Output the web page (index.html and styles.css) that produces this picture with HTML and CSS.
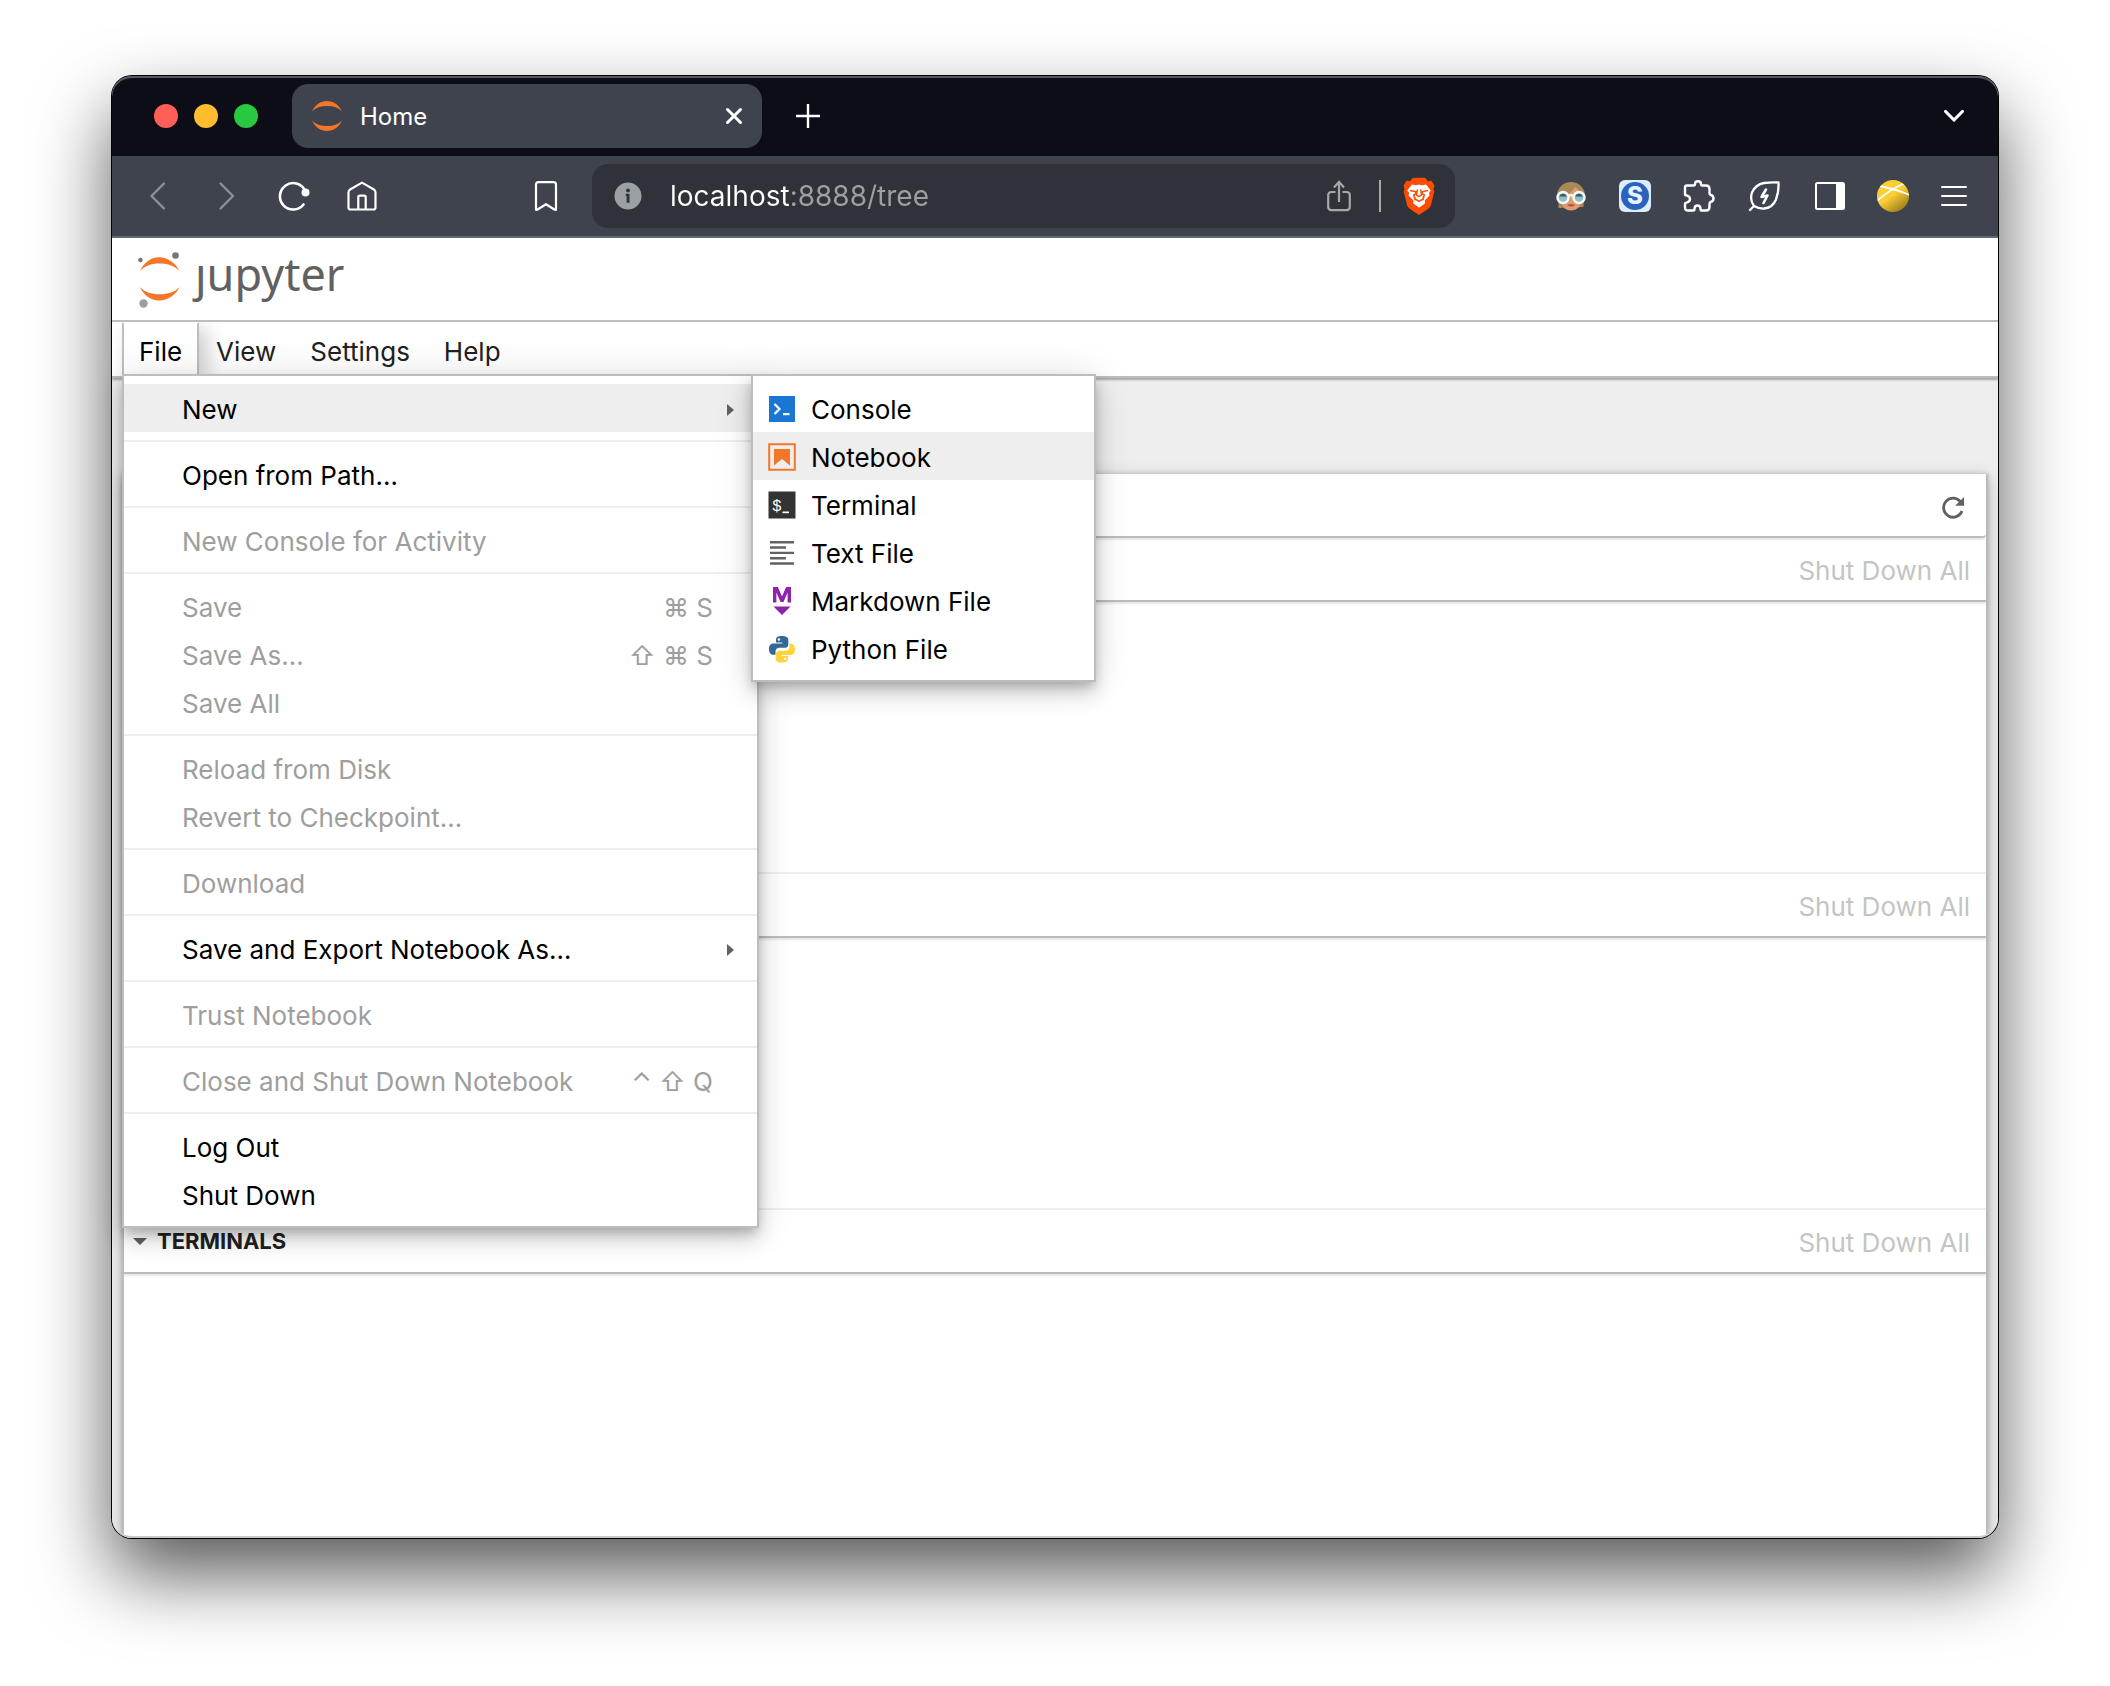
FILE: index.html
```html
<!DOCTYPE html>
<html lang="en">
<head>
<meta charset="utf-8">
<title>Home</title>
<meta name="viewport" content="width=device-width, initial-scale=1">
<link rel="stylesheet" href="styles.css">
</head>
<body>
<div class="window">
  <div class="tabstrip">
    <div class="lights">
      <button class="light light-close" aria-label="Close window"></button>
      <button class="light light-min" aria-label="Minimize window"></button>
      <button class="light light-max" aria-label="Zoom window"></button>
    </div>
    <div class="tab">
      <svg class="tab-icon" viewBox="0 0 30 30" fill="#f37726"><path d="M0 10.500C3 4 8.500 0 15 0s12 4 15 10.500C26.500 6.800 21.500 5 15 5S3.500 6.800 0 10.500zM0 19.500C3 26 8.500 30 15 30s12-4 15-10.500C26.500 23.200 21.500 25 15 25S3.500 23.200 0 19.500z"/></svg>
      <span class="tab-title">Home</span>
      <button class="icon-button" aria-label="Close tab"><svg width="16" height="16" viewBox="0 0 16 16" fill="none" stroke="#fff" stroke-width="3" stroke-linecap="round"><path d="M1.500 1.500l13 13M14.500 1.500l-13 13"/></svg></button>
    </div>
    <button class="icon-button" aria-label="New tab"><svg width="24" height="24" viewBox="0 0 24 24" fill="none" stroke="#fff" stroke-width="2.400"><path d="M12 0v24M0 12h24"/></svg></button>
    <button class="icon-button tab-list" aria-label="Search tabs"><svg width="20" height="14" viewBox="0 0 20 14" fill="none" stroke="#fff" stroke-width="3.200" stroke-linecap="round" stroke-linejoin="round"><path d="M1.600 2.500l8.400 8.500 8.400-8.500"/></svg></button>
  </div>

  <div class="toolbar">
    <div class="nav-buttons">
      <button class="icon-button" aria-label="Back"><svg width="32" height="32" viewBox="0 0 32 32" fill="none" stroke="#8b9096" stroke-width="2.400" stroke-linecap="round" stroke-linejoin="round"><path d="M22 3.500L9.500 16 22 28.500"/></svg></button>
      <button class="icon-button" aria-label="Forward"><svg width="32" height="32" viewBox="0 0 32 32" fill="none" stroke="#8b9096" stroke-width="2.400" stroke-linecap="round" stroke-linejoin="round"><path d="M10.500 3.500L23 16 10.500 28.500"/></svg></button>
      <button class="icon-button" aria-label="Reload"><svg width="32" height="32" viewBox="0 0 32 32" fill="none" stroke="#fff" stroke-width="2.600" stroke-linecap="round"><path d="M27 10.500A13.200 13.200 0 1 0 25.500 24.500"/><circle cx="27.500" cy="12.500" r="4" fill="#fff" stroke="none"/></svg></button>
      <button class="icon-button" aria-label="Home page"><svg width="32" height="32" viewBox="0 0 32 32" fill="none" stroke="#fff" stroke-width="2.200" stroke-linejoin="round"><path d="M2.500 12.500q0-2 1.600-3L16 2.600l11.900 6.900q1.600 1 1.600 3V27.500q0 2-2 2h-23q-2 0-2-2zM12.300 29.500V17q0-1.400 1.400-1.400h4.600q1.400 0 1.400 1.400v12.500"/></svg></button>
    </div>
    <button class="icon-button bookmark" aria-label="Bookmark"><svg width="32" height="32" viewBox="0 0 32 32" fill="none" stroke="#fff" stroke-width="2.200" stroke-linejoin="round"><path d="M8.500 2.200h15q2.500 0 2.500 2.500v24.500q0 1.300-1.200.5L16 24.200l-8.800 5.500q-1.200.8-1.200-.5V4.700q0-2.500 2.500-2.500z"/></svg></button>
    <div class="address">
      <svg width="28" height="28" viewBox="0 0 28 28"><circle cx="14" cy="14" r="13.500" fill="#9ba0a5"/><circle cx="14" cy="8.400" r="1.900" fill="#2f3239"/><path d="M11.800 11.700h3.700v9h-2.900v-7h-.8z" fill="#2f3239"/></svg>
      <input class="address-input" type="text" aria-label="Address" value="localhost:8888/tree">
      <button class="icon-button" aria-label="Share"><svg width="24" height="32" viewBox="0 0 24 32" fill="none" stroke="#a5a8ab" stroke-width="2.200"><path d="M8.500 12H4.500Q1.200 12 1.200 15.300v11.500q0 3.300 3.300 3.300h15q3.300 0 3.300-3.300V15.300q0-3.300-3.300-3.300h-4M12 22V2.200M7 7.400l5-5.600 5 5.600"/></svg></button>
      <span class="address-rule"></span>
      <button class="icon-button" aria-label="Shields"><svg width="32" height="38" viewBox="0 0 32 38"><path d="M10 .8h12l3 3.400 3.500-.4 3 4.800-1 3.400.8 2.600-3.300 13.500q-.7 2.300-2.600 3.700L16 38l-9.400-6.200Q4.700 30.400 4 28.100L.7 14.600l.8-2.600-1-3.400 3-4.800 3.500.4z" fill="#fb4c02"/><path d="M9 7.400l4 .9 3-.8 3 .8 4-.9 4.800 6-1.700 2.300.4 2.700-4.700 5.200.3 2.700-6 4.500-6-4.500.3-2.700-4.800-5.200.5-2.700-1.900-2.300z" fill="#fff"/><path d="M6.800 13.600l5.600 1 .8 2-2.500 1.200 1.500 4.300 3.800 2.300 3.800-2.300 1.500-4.300-2.500-1.200.8-2 5.600-1M14.300 12.500L13.500 18l2.500 1.700 2.500-1.700-.8-5.500" fill="none" stroke="#fb4c02" stroke-width="1.500"/><path d="M9.500 17l2 6.300 2.500.2-2.600-2zM22.500 17l-2 6.300-2.500.2 2.600-2z" fill="#fb4c02"/></svg></button>
    </div>
    <div class="extensions">
      <button class="icon-button" aria-label="Profile extension"><svg width="32" height="32" viewBox="0 0 32 32"><circle cx="16" cy="16" r="14" fill="#a98958"/><path d="M3.500 18h4v10h-4zM24.500 18h4v9h-4z" fill="#a98958"/><path d="M5.500 16Q17 14 20 7q5 3 6.500 9 0 14-10.500 14.500Q6 30 5.500 16z" fill="#e29a70"/><path d="M12 25q4-2 8 0-4 3-8 0z" fill="#b0523e"/><g fill="#8dc1ca" stroke="#f5f8f8" stroke-width="2.500"><circle cx="8" cy="17.500" r="5.500"/><circle cx="24" cy="17.500" r="5.500"/><path d="M13.500 16q2.500-1.500 5 0" fill="none"/></g><path d="M4 16.500a4.300 4.300 0 0 1 8 0zM20 16.500a4.300 4.300 0 0 1 8 0z" fill="#3d5860"/></svg></button>
      <button class="icon-button s-badge" aria-label="S extension"><span class="s-badge-disc">S</span></button>
      <button class="icon-button" aria-label="Extensions"><svg width="32" height="32" viewBox="0 0 32 32" fill="none" stroke="#fff" stroke-width="2.400" stroke-linejoin="round"><path d="M4 5.500h6.500q1.500 0 1.500-1.200 0-3 3-3t3 3q0 1.200 1.500 1.200h3.500q3.500 0 3.500 3.500v4q0 1.800 1.200 2 2.800.6 2.800 3.500t-2.800 3.500q-1.200.3-1.200 2v3q0 3.500-3.500 3.500h-4.500q-1 0-1-2-.3-3-3-3t-3 3q0 2-1 2H5q-3 0-3-3v-3.500q0-1 1.500-1.300 3.500-1 3.500-3.700t-3.500-3.700Q2 15.500 2 14.500v-7q0-2 2-2z"/></svg></button>
      <button class="icon-button" aria-label="Energy saver"><svg width="36" height="32" viewBox="0 0 36 32" fill="none" stroke="#fff" stroke-width="2.300" stroke-linecap="round" stroke-linejoin="round"><path d="M3 30l4-4Q2.500 20 5 12.500 8.500 4.500 17 3q8-1 14.500-.5.500 9-2.500 17-3.500 8.500-12 9-5.500.300-10-2.500"/><path d="M19 9.500L14.500 17l6-1.500L16.500 23" stroke-width="2.600"/></svg></button>
      <button class="icon-button" aria-label="Side panel"><svg width="30" height="28" viewBox="0 0 30 28"><rect x="1" y="1" width="28" height="26" rx="1.500" fill="none" stroke="#fff" stroke-width="2"/><path d="M21 1h8v26h-8z" fill="#fff"/></svg></button>
      <button class="icon-button" aria-label="Profile"><svg width="32" height="32" viewBox="0 0 32 32"><defs><linearGradient id="gold" x1=".2" y1=".1" x2=".8" y2=".95"><stop offset=".45" stop-color="#f9ce37"/><stop offset="1" stop-color="#9b7a16"/></linearGradient><clipPath id="disc"><circle cx="16" cy="16" r="16"/></clipPath></defs><circle cx="16" cy="16" r="16" fill="url(#gold)"/><path d="M0 21Q12 10 28 3M3 6q15 3 30 9" fill="none" stroke="#fff" stroke-width="1.800" clip-path="url(#disc)"/></svg></button>
      <button class="icon-button" aria-label="Browser menu"><svg width="26" height="20" viewBox="0 0 26 20" stroke="#fff" stroke-width="2" stroke-linecap="round"><path d="M1 1h24M1 10h24M1 19h24"/></svg></button>
    </div>
  </div>

  <header class="site-header">
    <a class="logo" href="#">
      <svg width="44" height="58" viewBox="0 0 44 58"><path d="M3 20C6.500 12 13.500 6.200 22 6.200S39 12 42.500 20C38 15 31 12.400 22.500 12.400S7.500 15 3 20zM3 36C6.500 44 13.500 49.500 22 49.500S39 44 42.500 36C38 41 31 43.300 22.500 43.300S7.500 41 3 36z" fill="#f37726"/><circle cx="38.500" cy="4.500" r="3.300" fill="#767677"/><circle cx="3.500" cy="9" r="2.300" fill="#767677"/><circle cx="6.500" cy="52.500" r="4.200" fill="#9e9e9e"/></svg>
      <span class="logo-text">ȷupyter</span>
    </a>
  </header>

  <nav class="menubar">
    <div class="menubar-entry">
      <button class="menubar-item is-open">File</button>
      <div class="menu file-menu">
        <button class="menu-item is-active">New<svg class="caret" width="8" height="14" viewBox="0 0 8 14"><path d="M0 1l7 6-7 6z" fill="#616161"/></svg></button>
        <hr>
        <button class="menu-item">Open from Path…</button>
        <hr>
        <button class="menu-item" disabled>New Console for Activity</button>
        <hr>
        <button class="menu-item" disabled>Save<kbd>⌘ S</kbd></button>
        <button class="menu-item" disabled>Save As…<kbd>⇧ ⌘ S</kbd></button>
        <button class="menu-item" disabled>Save All</button>
        <hr>
        <button class="menu-item" disabled>Reload from Disk</button>
        <button class="menu-item" disabled>Revert to Checkpoint…</button>
        <hr>
        <button class="menu-item" disabled>Download</button>
        <hr>
        <button class="menu-item">Save and Export Notebook As…<svg class="caret" width="8" height="14" viewBox="0 0 8 14"><path d="M0 1l7 6-7 6z" fill="#616161"/></svg></button>
        <hr>
        <button class="menu-item" disabled>Trust Notebook</button>
        <hr>
        <button class="menu-item" disabled>Close and Shut Down Notebook<kbd>⌃ ⇧ Q</kbd></button>
        <hr>
        <button class="menu-item">Log Out</button>
        <button class="menu-item">Shut Down</button>
        <div class="menu submenu">
          <button class="menu-item"><svg class="menu-icon" viewBox="0 0 26 26"><path d="M0 0h26v26H0z" fill="#1976d2"/><path d="M5.500 8l5 5-5 5" fill="none" stroke="#fff" stroke-width="2.200"/><path d="M14 17h6.500v2.200H14z" fill="#fff"/></svg>Console</button>
          <button class="menu-item is-active"><svg class="menu-icon" viewBox="0 0 26 26"><path d="M.2.200h25.600v25.600H.2z" fill="none" stroke="#f37726" stroke-width="2"/><path d="M5 5h16v16.500l-8-6.500-8 6.500z" fill="#f37726"/></svg>Notebook</button>
          <button class="menu-item"><svg class="menu-icon" viewBox="0 0 26 26"><path d="M-.5-.5h27v27h-27z" fill="#333"/><text x="3" y="19" class="icon-mono">$</text><path d="M13.500 19.500H20v1.700h-6.500z" fill="#fff"/></svg>Terminal</button>
          <button class="menu-item"><svg class="menu-icon" viewBox="0 0 26 26"><path d="M1 1h24v2.400H1zM1 6.300h16v2.400H1zM1 11.700h24v2.400H1zM1 17h16v2.400H1zM1 22.300h24v2.400H1z" fill="#616161"/></svg>Text File</button>
          <button class="menu-item"><svg class="menu-icon" viewBox="0 0 26 26" fill="#8e24aa"><path d="M4 14.500V-1h4.900L13 8.500 17.100-1H22v15.500h-3.400V4.500L14.500 14h-3L7.400 4.500v10zM4.500 18.500h17L13 27z"/></svg>Markdown File</button>
          <button class="menu-item"><svg class="menu-icon" viewBox="0 0 26 26"><path d="M12.800 0C8.500 0 7 1.500 7 3.600V6.500h6.300v1H4.200C1.500 7.500 0 9.700 0 13.200s1.600 5.600 4 5.600h2.500v-3.300c0-2.300 1.800-3.800 4-3.800h5.800c2 0 3-1.500 3-3.300V3.600C19.300 1.200 16.800 0 12.800 0z" fill="#306998"/><circle cx="9.900" cy="3.500" r="1.200" fill="#fff"/><path d="M13.200 26.500c4.300 0 5.800-1.500 5.800-3.600V20h-6.300v-1h9.100c2.700 0 4.200-2.200 4.200-5.700s-1.600-5.600-4-5.600h-1.500V11c0 2.300-1.800 3.800-4 3.800h-5.800c-2 0-4 1.500-4 3.300v4.800c0 2.400 2.500 3.600 6.500 3.600z" fill="#ffd43b"/><circle cx="16.100" cy="22.900" r="1.200" fill="#fff"/></svg>Python File</button>
        </div>
      </div>
    </div>
    <button class="menubar-item">View</button>
    <button class="menubar-item">Settings</button>
    <button class="menubar-item">Help</button>
  </nav>

  <main class="page">
    <div class="panel">
      <div class="panel-toolbar">
        <button class="icon-button" aria-label="Refresh"><svg width="24" height="24" viewBox="0 0 24 24"><path d="M21 15a9.500 9.500 0 1 1-1.700-9.500" fill="none" stroke="#616161" stroke-width="2.800"/><path d="M23 1v8.800h-8.800z" fill="#616161"/></svg></button>
      </div>
      <section class="running">
        <div class="running-header"><button class="shutdown" disabled>Shut Down All</button></div>
      </section>
      <section class="running">
        <div class="running-header"><button class="shutdown" disabled>Shut Down All</button></div>
      </section>
      <section class="running">
        <div class="running-header">
          <svg width="14" height="8" viewBox="0 0 14 8"><path d="M0 1h14L7 8z" fill="#616161"/></svg>
          <h2>TERMINALS</h2>
          <button class="shutdown" disabled>Shut Down All</button>
        </div>
      </section>
    </div>
  </main>
</div>
</body>
</html>
```
FILE: styles.css
```css
* { box-sizing: border-box; }

:root {
  --line: #bdbdbd;
  --hover: #eeeeee;
  --chrome: #3e434e;
  --ui-size: 26px;
}

body {
  display: flex;
  flex-direction: column;
  min-height: 100vh;
  margin: 0;
  padding: 76px 112px 148px;
  background: #fff;
  color: #212121;
  font-family: Inter, "DejaVu Sans", sans-serif;
  font-size: var(--ui-size);
}

button {
  margin: 0;
  padding: 0;
  border: 0;
  background: none;
  color: inherit;
  font: inherit;
}

svg { display: block; flex: none; overflow: visible; }

.icon-button {
  display: flex;
  flex: none;
  align-items: center;
  justify-content: center;
}

.window {
  position: relative;
  display: flex;
  flex: 1;
  flex-direction: column;
  border-radius: 20px;
  box-shadow: 0 0 0 1px #000, 0 36px 76px rgba(0, 0, 0, .66);
}

/* Tab strip */
.tabstrip {
  display: flex;
  align-items: center;
  height: 80px;
  padding: 0 34px 0 42px;
  border-radius: 20px 20px 0 0;
  background: #0d0d18;
  box-shadow: inset 0 2px 0 #55585e;
}

.lights { display: flex; gap: 16px; margin-right: 34px; }
.light { width: 24px; height: 24px; border-radius: 50%; }
.light-close { background: #ff5f57; }
.light-min { background: #febc2e; }
.light-max { background: #28c840; }

.tab {
  display: flex;
  align-items: center;
  width: 470px;
  height: 64px;
  margin-right: 34px;
  padding: 0 20px;
  border-radius: 16px;
  background: var(--chrome);
  color: #fff;
  font-size: 24px;
}

.tab-icon { width: 30px; height: 30px; margin-right: 18px; }
.tab-title { flex: 1; }
.tab-list { margin-left: auto; }

/* Navigation toolbar */
.toolbar {
  display: flex;
  align-items: center;
  height: 82px;
  padding: 0 31px 0 30px;
  border-bottom: 2px solid #5f6873;
  background: var(--chrome);
}

.nav-buttons { display: flex; gap: 36px; }
.bookmark { margin-left: 152px; }

.address {
  display: flex;
  flex: 1;
  align-items: center;
  height: 64px;
  min-width: 0;
  margin: 0 100px 0 30px;
  padding: 0 20px 0 22px;
  border-radius: 16px;
  background: #2f3239;
}

.address-input {
  flex: 1;
  min-width: 0;
  margin-left: 28px;
  padding: 0;
  border: 0;
  outline: 0;
  background: linear-gradient(90deg, #fff 120px, #9ba0a5 120px);
  background-clip: text;
  -webkit-background-clip: text;
  color: transparent;
  font: inherit;
  font-size: 28px;
}

.address-rule { width: 2px; height: 32px; margin: 0 22px 0 28px; background: #a5a8ab; }

.extensions { display: flex; align-items: center; gap: 32px; }

.s-badge {
  width: 32px;
  height: 32px;
  border-radius: 6px;
  background: #dceefd;
}

.s-badge-disc {
  width: 28px;
  height: 28px;
  border-radius: 50%;
  background: #2b62bd;
  color: #e6f3ff;
  font-size: 24px;
  font-weight: 800;
  line-height: 28px;
  text-align: center;
}

/* Site header */
.site-header {
  position: relative;
  z-index: 3;
  display: flex;
  height: 84px;
  padding: 13px 25px 0;
  border-bottom: 2px solid var(--line);
  background: #fff;
}

.logo {
  display: flex;
  gap: 14px;
  color: #616161;
  text-decoration: none;
}

.logo-text {
  font-family: "Noto Sans", sans-serif;
  font-size: 45px;
  line-height: 46px;
}

/* Menu bar */
.menubar {
  position: relative;
  z-index: 2;
  display: flex;
  align-items: flex-start;
  height: 56px;
  padding-left: 10px;
  border-bottom: 2px solid var(--line);
  background: #fff;
  box-shadow: 0 2px 2px rgba(0, 0, 0, .3);
}

.menubar-entry { position: relative; z-index: 1; }

.menubar-item {
  height: 54px;
  padding: 0 15px;
  border: 2px solid transparent;
  line-height: 56px;
}

.menubar > .menubar-item { position: relative; }

.menubar-item.is-open {
  height: 52px;
  border-color: transparent var(--line);
  border-bottom: 0;
  background: #fff;
  box-shadow: 8px 6px 20px rgba(0, 0, 0, .2);
  color: #000;
}

.menu {
  position: absolute;
  padding: 8px 0;
  border: 2px solid var(--line);
  background: #fff;
  box-shadow: 0 6px 10px -2px rgba(0, 0, 0, .2), 0 12px 20px rgba(0, 0, 0, .14), 0 2px 36px rgba(0, 0, 0, .12);
  color: #000;
}

.file-menu { top: 52px; left: 0; width: 637px; }
.submenu { top: -2px; left: 627px; width: 345px; }

.menu-item {
  display: flex;
  align-items: center;
  width: 100%;
  height: 48px;
  padding: 2px 22px 0 58px;
  text-align: left;
  white-space: nowrap;
}

.menu-item.is-active { background: var(--hover); }
.menu-item:disabled { color: #9e9e9e; }

.menu-item kbd {
  margin: 0 22px 0 auto;
  font: inherit;
}

.caret { margin: 2px 0 0 auto; }

.menu hr {
  height: 2px;
  margin: 8px 0;
  border: 0;
  background: var(--hover);
}

.submenu .menu-item { gap: 16px; padding: 2px 16px 0; }
.menu-icon { width: 26px; height: 26px; }
.icon-mono { fill: #fff; font: 16px "Liberation Mono", monospace; }

/* Page content */
.page {
  display: flex;
  flex: 1;
  flex-direction: column;
  overflow: hidden;
  padding: 96px 10px 0;
  border-bottom: 2px solid #c8c8c8;
  border-radius: 0 0 20px 20px;
  background: #eeeeee;
}

.panel {
  flex: 1;
  border: solid var(--line);
  border-width: 0 2px;
  background: #fff;
  box-shadow: 0 0 4px rgba(0, 0, 0, .2), 0 4px 16px rgba(0, 0, 0, .24);
}

.panel-toolbar {
  display: flex;
  align-items: center;
  justify-content: flex-end;
  height: 64px;
  padding: 6px 21px 0;
  border-bottom: 2px solid var(--line);
  border-radius: 0 0 4px 4px;
  box-shadow: 0 2px 2px rgba(0, 0, 0, .1);
}

.running { padding-bottom: 270px; }

.running:last-child { padding-bottom: 0; }

.running-header {
  display: flex;
  align-items: center;
  height: 64px;
  padding: 0 16px 0 9px;
  border-bottom: 2px solid var(--line);
  box-shadow: 0 2px 2px rgba(0, 0, 0, .1);
}

.running + .running .running-header {
  height: 66px;
  border-top: 2px solid var(--hover);
}

.running h2 {
  margin: 0 0 0 10px;
  font-size: 22px;
  font-weight: 700;
}

.shutdown { margin-left: auto; padding-top: 2px; }
.shutdown:disabled { color: #c4c4c4; }
```
